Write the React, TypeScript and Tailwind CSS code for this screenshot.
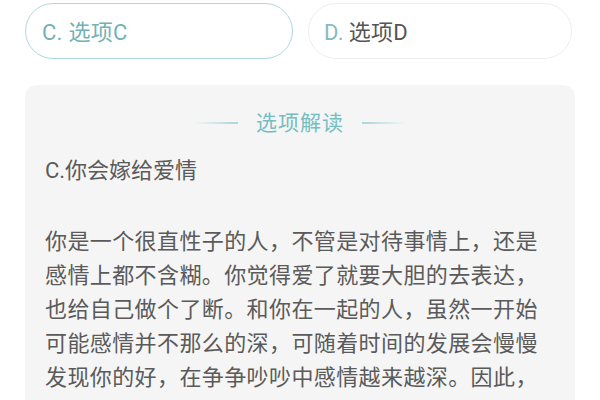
import React from 'react';

const lines = [
  '你是一个很直性子的人，不管是对待事情上，还是',
  '感情上都不含糊。你觉得爱了就要大胆的去表达，',
  '也给自己做个了断。和你在一起的人，虽然一开始',
  '可能感情并不那么的深，可随着时间的发展会慢慢',
  '发现你的好，在争争吵吵中感情越来越深。因此，',
];

function App() {
  return (
    <div
      className="w-[600px] h-[400px] overflow-hidden bg-white px-[25px]"
      style={{ fontFamily: 'Roboto, "Noto Sans CJK SC", sans-serif' }}
    >
      <div className="flex gap-[15px] pt-[3px]">
        <div className="flex h-[56px] w-[268px] items-center rounded-full border border-[#b0d6d7] pl-[16px] pt-[2px] text-[22px] tracking-[0.3px] text-[#72b1b4]">
          C. 选项C
        </div>
        <div className="flex h-[56px] w-[264px] items-center rounded-full border border-[#eeeeee] pl-[15px] pt-[2px] text-[22px] tracking-[0.3px] text-[#555]">
          <span className="text-[#86bcbd]">D.</span>
          <span className="ml-[5px]">选项D</span>
        </div>
      </div>

      <section className="mt-[26px] rounded-[12px] bg-[#f5f5f5] px-[20px] pt-[24px] pb-[20px]">
        <div className="flex items-center justify-center gap-[18px]">
          <div className="h-[2px] w-[44px] bg-gradient-to-r from-transparent to-[#a9d5d8]" />
          <h2 className="text-[21px] leading-[28px] tracking-[1px] text-[#74bec2]">选项解读</h2>
          <div className="h-[2px] w-[44px] bg-gradient-to-l from-transparent to-[#a9d5d8]" />
        </div>

        <p className="mt-[17px] text-[22px] leading-[34px] text-[#5a5a5a]">C.你会嫁给爱情</p>

        <div className="mt-[37px] text-[22px] leading-[34px] tracking-[0.4px] text-[#5a5a5a]">
          {lines.map((l) => (
            <div key={l} className="whitespace-nowrap">
              {l}
            </div>
          ))}
        </div>
      </section>
    </div>
  );
}

export default App;
